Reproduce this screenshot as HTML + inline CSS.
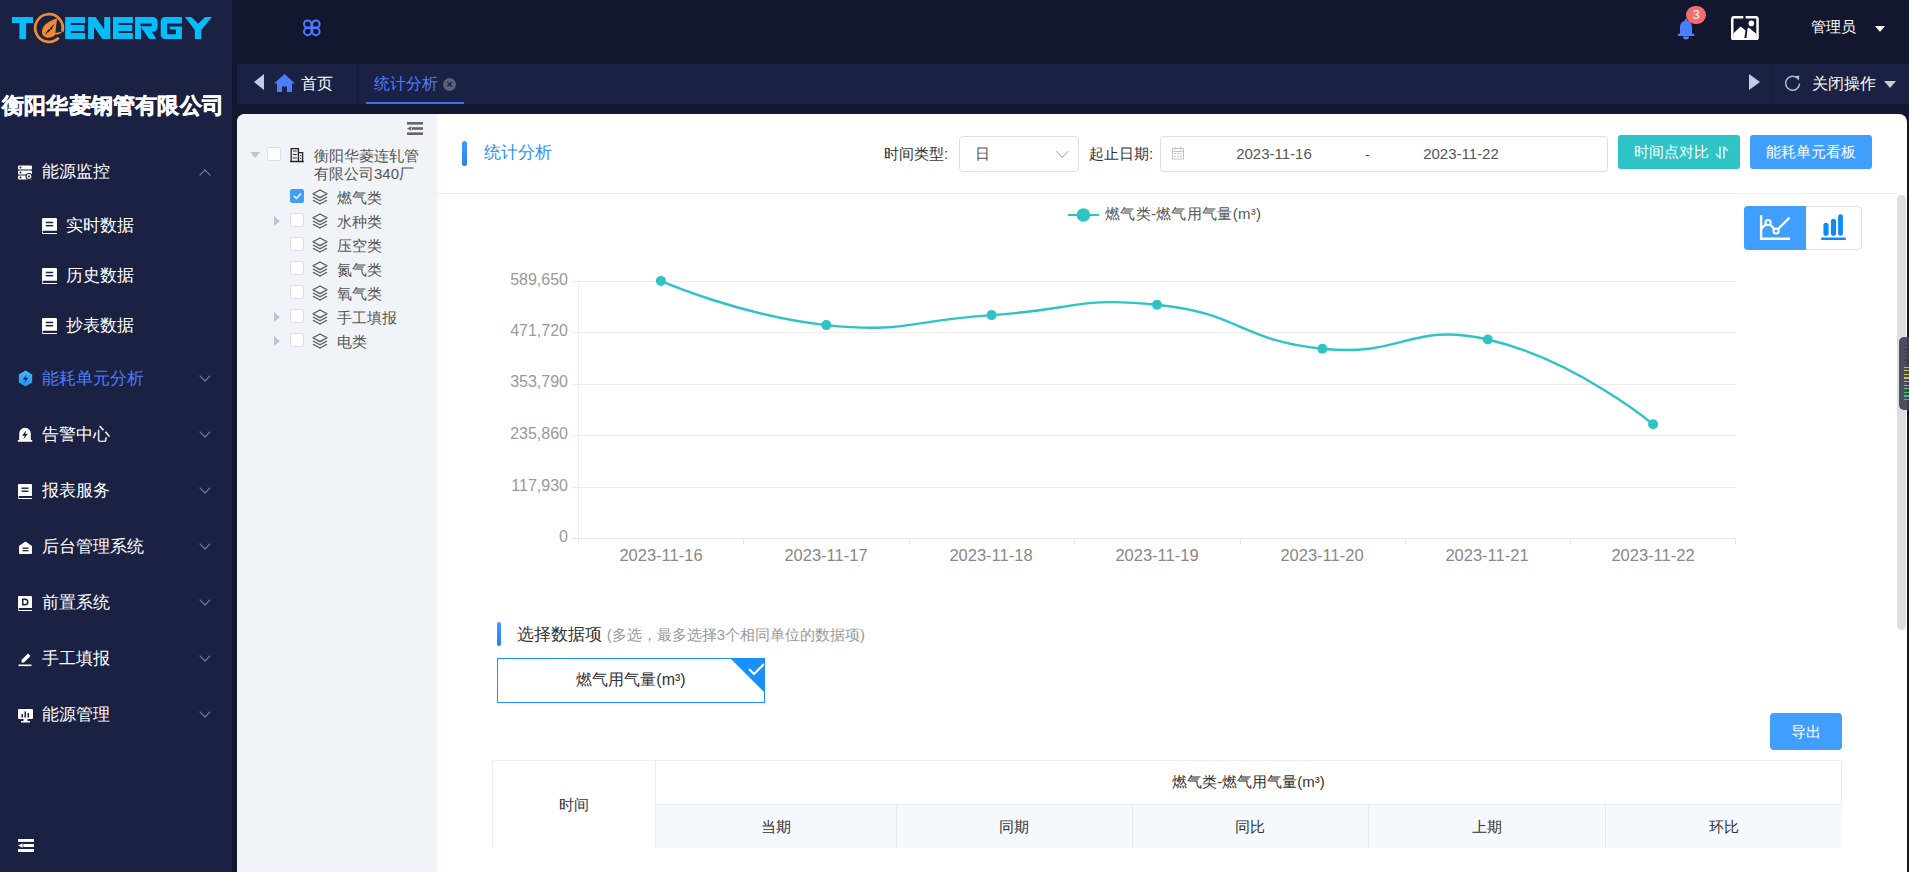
<!DOCTYPE html>
<html><head><meta charset="utf-8">
<style>
*{box-sizing:border-box;margin:0;padding:0}
html,body{width:1909px;height:872px;overflow:hidden;background:#12162e;font-family:"Liberation Sans",sans-serif;}
.abs{position:absolute}
#side{position:absolute;left:0;top:0;width:232px;height:872px;background:#1b2142;color:#fff}
#tabs{position:absolute;left:237px;top:64px;width:1672px;height:40px;background:#1b2142}
#content{position:absolute;left:237px;top:114px;width:1670px;height:780px;background:#fff;border-radius:8px 8px 0 0;overflow:hidden}
#tree{position:absolute;left:0;top:0;width:200px;height:800px;background:#f0f3f8}
.menu{position:absolute;left:0;width:232px;height:40px;font-size:17px;color:#fff;line-height:41px;white-space:nowrap;font-weight:500}
.menu .t{position:absolute;left:42px;top:0}
.menu svg{position:absolute;left:18px;top:13.5px}
.sub .t{left:66px}
.sub svg{left:42px;top:12.5px;width:15px;height:16px}
.chev{position:absolute;left:200.5px;top:14px;width:8px;height:8px;border-right:1.3px solid #80869e;border-bottom:1.3px solid #80869e;transform:rotate(45deg)}
.chev.up{transform:rotate(-135deg);top:20px}
.ylab{position:absolute;left:0;width:568px;font-size:16px;color:#999;text-align:right;line-height:18px}
.xlab{position:absolute;top:546px;font-size:16.5px;color:#888;width:120px;text-align:center;line-height:18px}
.tn{position:absolute;left:100px;font-size:15px;color:#555;line-height:22px;white-space:nowrap}
.cb{position:absolute;left:53px;width:14px;height:14px;border:1px solid #dcdfe6;background:#fff;border-radius:2px}
.tri{position:absolute;left:37px;width:0;height:0;border-top:5px solid transparent;border-bottom:5px solid transparent;border-left:6px solid #c0c4cc}
.lay{position:absolute;left:75px}
.th{position:absolute;font-size:15px;color:#333;text-align:center;line-height:20px}
</style></head>
<body>
<!-- sidebar -->
<div id="side">
  <svg class="abs" style="left:0;top:0" width="232" height="60" viewBox="0 0 232 60">
  <g fill="#06bdfb">
    <path d="M11.9 17.1H33V23.1H26.1V39H19.4V23.1H11.9z"/>
    <path d="M65.2 17.1H85.1V23H70.7V25.1H84.5V31H70.7V33H85.1V39H65.2z"/>
    <path d="M88.1 17.1H95.4L104.2 29.6V17.1H110.3V39H102.4L94 26.8V39H88.1z"/>
    <path d="M113 17.1H132.9V23H118.5V25.1H132.3V31H118.5V33H132.9V39H113z"/>
    <path d="M135.1 17.1H153A4.6 4.6 0 0 1 157.6 21.7V27.2A4.6 4.6 0 0 1 153 31.8H152L156.2 39H149.1L141 27V39H135.1zM140.5 23.4V26.3H151.7V23.4z" fill-rule="evenodd"/>
    <path d="M165 17.1H181.9V23.4H167V34.3H175.9V29.4H170.4L169.2 26.5H181.9V39H165A4.3 4.3 0 0 1 160.7 34.7V21.4A4.3 4.3 0 0 1 165 17.1z"/>
    <path d="M185 17.1H191.4L198.1 23.8 205.2 17.1H211.9L201.2 30V39H194.8V30z"/>
  </g>
  <g fill="none" stroke="#f08a33" stroke-width="2.7">
    <path d="M62.33 31.57A13.8 13.8 0 1 0 58.76 37.76"/>
  </g>
  <path d="M57.2 18.6C49.5 20.5 42.6 25 42 31C41.6 35.2 44.8 38 49 37.8C52 37.6 54.2 36.2 55.2 34.6C58.5 34.4 61 33.5 62.5 31.4L55.4 33C55.8 28 56.5 23 57.2 18.6Z" fill="#f08a33"/>
  <path d="M45.6 34.2L48.5 30.2 48.7 31.4 51.3 27.6 51.5 28.7 53.6 24.8" fill="none" stroke="#1b2142" stroke-width="1.1"/>
</svg>
  <div class="abs" style="left:2px;top:91px;font-size:22px;font-weight:700;color:#fff;white-space:nowrap;letter-spacing:0.2px;-webkit-text-stroke:0.5px #fff">衡阳华菱钢管有限公司</div>

  <div class="menu" style="top:151px">
    <svg width="14" height="15" viewBox="0 0 14 15"><rect x="0" y="0.5" width="14" height="4" rx="1" fill="#fff"/><rect x="0" y="5.5" width="14" height="4" rx="1" fill="#fff"/><rect x="0" y="10.5" width="14" height="4" rx="1" fill="#fff"/><circle cx="2.5" cy="2.5" r="1" fill="#1b2142"/><circle cx="2.5" cy="7.5" r="1" fill="#1b2142"/><circle cx="2.5" cy="12.5" r="1" fill="#1b2142"/><circle cx="11" cy="11.5" r="3.5" fill="#1b2142"/><circle cx="11" cy="11.5" r="2.4" fill="#fff"/><circle cx="11" cy="11.5" r="1" fill="#1b2142"/></svg>
    <span class="t">能源监控</span><div class="chev up"></div></div>
  <div class="menu sub" style="top:205px"><svg width="14" height="15" viewBox="0 0 14 15"><path d="M1 0h12a1 1 0 0 1 1 1v11H1.5a1 1 0 0 0 0 2H14v1H1a1 1 0 0 1-1-1V1a1 1 0 0 1 1-1z" fill="#fff"/><rect x="3.5" y="3.5" width="7" height="1.4" fill="#1b2142"/><rect x="3.5" y="6.5" width="7" height="1.4" fill="#1b2142"/></svg><span class="t">实时数据</span></div>
  <div class="menu sub" style="top:255px"><svg width="14" height="15" viewBox="0 0 14 15"><path d="M1 0h12a1 1 0 0 1 1 1v11H1.5a1 1 0 0 0 0 2H14v1H1a1 1 0 0 1-1-1V1a1 1 0 0 1 1-1z" fill="#fff"/><rect x="3.5" y="3.5" width="7" height="1.4" fill="#1b2142"/><rect x="3.5" y="6.5" width="7" height="1.4" fill="#1b2142"/></svg><span class="t">历史数据</span></div>
  <div class="menu sub" style="top:305px"><svg width="14" height="15" viewBox="0 0 14 15"><path d="M1 0h12a1 1 0 0 1 1 1v11H1.5a1 1 0 0 0 0 2H14v1H1a1 1 0 0 1-1-1V1a1 1 0 0 1 1-1z" fill="#fff"/><rect x="3.5" y="3.5" width="7" height="1.4" fill="#1b2142"/><rect x="3.5" y="6.5" width="7" height="1.4" fill="#1b2142"/></svg><span class="t">抄表数据</span></div>
  <div class="menu" style="top:358px;color:#4d7cfe">
    <svg width="15" height="17" viewBox="0 0 15 17" style="top:11.5px"><defs><linearGradient id="hg" x1="0" y1="0" x2="0" y2="1"><stop offset="0" stop-color="#3cc0f8"/><stop offset="1" stop-color="#2b8cf0"/></linearGradient></defs><path d="M7.5 0.6L14.2 4.4v8.2L7.5 16.4 0.8 12.6V4.4z" fill="url(#hg)"/><path d="M8.8 4.2L4.9 9.4h2.6L6.3 13 10.2 7.8H7.6z" fill="#1b2142"/></svg>
    <span class="t">能耗单元分析</span><div class="chev"></div></div>
  <div class="menu" style="top:414px">
    <svg width="16" height="16" viewBox="0 0 16 16" style="left:17px;top:12.5px"><path d="M2.2 13V6.6A5.8 5.8 0 0 1 13.8 6.6V13H15.2V14.8H0.8V13z" fill="#fff"/><path d="M9.3 3.3L5 8.8H7.6L6.5 12.2 10.8 6.7H8.2z" fill="#1b2142"/></svg>
    <span class="t">告警中心</span><div class="chev"></div></div>
  <div class="menu" style="top:470px"><svg width="14" height="15" viewBox="0 0 14 15"><path d="M1 0h12a1 1 0 0 1 1 1v11H1.5a1 1 0 0 0 0 2H14v1H1a1 1 0 0 1-1-1V1a1 1 0 0 1 1-1z" fill="#fff"/><rect x="3.5" y="3.5" width="7" height="1.4" fill="#1b2142"/><rect x="3.5" y="6.5" width="7" height="1.4" fill="#1b2142"/></svg><span class="t">报表服务</span><div class="chev"></div></div>
  <div class="menu" style="top:526px">
    <svg width="15" height="15" viewBox="0 0 15 15"><path d="M7.5 1.5L14 6v7a1 1 0 0 1-1 1H2a1 1 0 0 1-1-1V6z" fill="#fff"/><rect x="4.5" y="7.5" width="6" height="1.3" fill="#1b2142"/><rect x="4.5" y="10" width="6" height="1.3" fill="#1b2142"/></svg>
    <span class="t">后台管理系统</span><div class="chev"></div></div>
  <div class="menu" style="top:582px">
    <svg width="14" height="15" viewBox="0 0 14 15"><path d="M1 0h12a1 1 0 0 1 1 1v11H1.5a1 1 0 0 0 0 2H14v1H1a1 1 0 0 1-1-1V1a1 1 0 0 1 1-1z" fill="#fff"/><path d="M4 2.5h3a3 3 0 0 1 0 7H4z" fill="#1b2142"/><path d="M5.5 4h1.5a1.5 1.5 0 0 1 0 4H5.5z" fill="#fff"/></svg>
    <span class="t">前置系统</span><div class="chev"></div></div>
  <div class="menu" style="top:638px">
    <svg width="15" height="15" viewBox="0 0 15 15"><path d="M10 1.5l2.5 2.5-6.5 6.5H3.5V8z" fill="#fff"/><rect x="0.5" y="12.5" width="13" height="1.6" fill="#fff"/></svg>
    <span class="t">手工填报</span><div class="chev"></div></div>
  <div class="menu" style="top:694px">
    <svg width="15" height="15" viewBox="0 0 15 15"><rect x="0" y="1" width="15" height="10" rx="1" fill="#fff"/><rect x="5.5" y="11" width="4" height="2" fill="#fff"/><rect x="3" y="13" width="9" height="1.5" fill="#fff"/><rect x="3.5" y="6" width="1.5" height="3.5" fill="#1b2142"/><rect x="6.5" y="3.5" width="1.5" height="6" fill="#1b2142"/><rect x="9.5" y="5" width="1.5" height="4.5" fill="#1b2142"/></svg>
    <span class="t">能源管理</span><div class="chev"></div></div>
  <svg class="abs" style="left:18px;top:838px" width="17" height="15" viewBox="0 0 17 15"><rect x="0" y="1" width="16" height="2.9" fill="#fff"/><rect x="5.3" y="6" width="10.7" height="3" fill="#fff"/><rect x="0" y="11.1" width="16" height="2.9" fill="#fff"/><path d="M0 7.5L4.6 5.2v4.6z" fill="#fff"/></svg>
</div>

<!-- header -->
<svg class="abs" style="left:300px;top:16px" width="24" height="24" viewBox="0 0 24 24"><g fill="none" stroke="#4a7dff" stroke-width="2"><path d="M11.8 11.8H7.7A3.7 3.7 0 1 1 11.4 8.1V11.8z"/><path d="M11.8 11.8H15.9A3.7 3.7 0 1 0 12.2 8.1V11.8z"/><path d="M11.8 11.8H7.7A3.7 3.7 0 1 0 11.4 15.5V11.8z"/><path d="M11.8 11.8H15.9A3.7 3.7 0 1 1 12.2 15.5V11.8z"/></g></svg>
<svg class="abs" style="left:1677px;top:18px" width="18" height="23" viewBox="0 0 18 23"><path d="M9 1a1.4 1.4 0 0 1 1.4 1.4v0.3C13.2 3.5 15 6 15 9v6.5l2.2 0.6v2H0.8v-2L3 15.5V9c0-3 1.8-5.5 4.6-6.3v-0.3A1.4 1.4 0 0 1 9 1z" fill="#4a80ff"/><path d="M6 18.5h6a3 3 0 0 1-6 0z" fill="#4a80ff"/></svg>
<div class="abs" style="left:1686px;top:6px;width:20px;height:18px;border-radius:9px;background:#f56c6c;color:#fff;font-size:13px;text-align:center;line-height:18px;border:0">3</div>
<svg class="abs" style="left:1730.5px;top:15.6px" width="28" height="24.5" viewBox="0 0 28 24.5"><path d="M12.3 1.25H2.75A1.5 1.5 0 0 0 1.25 2.75V21.75A1.5 1.5 0 0 0 2.75 23.25H25.05A1.5 1.5 0 0 0 26.55 21.75V2.75A1.5 1.5 0 0 0 25.05 1.25H14.6" fill="none" stroke="#fff" stroke-width="2.5"/><path d="M2.3 17.5L9.6 10.4 14.6 14.5 13.3 22.2H2.3z" fill="#fff"/><path d="M16.6 12.2A1.4 1.4 0 0 1 18 11.8L25.5 18V22.2H15.4z" fill="#fff"/><circle cx="20.3" cy="7.4" r="2.8" fill="#fff"/></svg>
<div class="abs" style="left:1811px;top:17px;font-size:15px;color:#fff;line-height:20px;font-weight:500">管理员</div>
<div class="abs" style="left:1875px;top:26px;width:0;height:0;border-left:5.5px solid transparent;border-right:5.5px solid transparent;border-top:6.5px solid #fff"></div>

<!-- tabs -->
<div id="tabs">
  <div class="abs" style="left:17px;top:10px;width:0;height:0;border-top:8px solid transparent;border-bottom:8px solid transparent;border-right:10px solid #c5cae9"></div>
  <svg class="abs" style="left:37px;top:10px" width="21" height="18" viewBox="0 0 21 18"><path d="M10.5 0L21 9.5h-3V18h-5v-5.5H8V18H3V9.5H0z" fill="#4d7cfe"/></svg>
  <div class="abs" style="left:64px;top:9px;font-size:16px;color:#fff;line-height:22px;font-weight:500">首页</div>
  <div class="abs" style="left:120px;top:0;width:1px;height:40px;background:#161b36"></div>
  <div class="abs" style="left:137px;top:9px;font-size:16px;color:#4d7cfe;line-height:22px">统计分析</div>
  <div class="abs" style="left:206px;top:14px;width:13px;height:13px;border-radius:50%;background:#5b6178;color:#1b2142;font-size:11px;line-height:13px;text-align:center;font-weight:bold">×</div>
  <div class="abs" style="left:129px;top:37.5px;width:98px;height:2.5px;background:#3d6df2"></div>
  <div class="abs" style="left:1512px;top:10px;width:0;height:0;border-top:8.2px solid transparent;border-bottom:8.2px solid transparent;border-left:11px solid #c5cae9"></div>
  <div class="abs" style="left:1535px;top:0;width:1px;height:40px;background:#161b36"></div>
  <svg class="abs" style="left:1547px;top:10px" width="18" height="18" viewBox="0 0 18 18"><path d="M15.6 9.5A7 7 0 1 1 12.8 3.6" fill="none" stroke="#b4b9d0" stroke-width="1.5"/><path d="M10.6 2.2L15.4 1.6 14.8 6.6z" fill="#b4b9d0"/></svg>
  <div class="abs" style="left:1575px;top:9px;font-size:16px;color:#fff;line-height:22px;font-weight:500">关闭操作</div>
  <div class="abs" style="left:1647px;top:17px;width:0;height:0;border-left:6px solid transparent;border-right:6px solid transparent;border-top:7px solid #ccc"></div>
</div>

<div id="content">
  <div id="tree">
    <svg class="abs" style="left:170px;top:8px" width="17" height="14" viewBox="0 0 17 14"><rect x="0" y="0" width="16" height="2.6" fill="#666"/><rect x="5" y="5.2" width="11" height="2.6" fill="#666"/><rect x="0" y="10.4" width="16" height="2.6" fill="#666"/><path d="M0 6.5L4.3 4.2v4.6z" fill="#666"/></svg>
    <div class="abs" style="left:13px;top:38px;width:0;height:0;border-left:5px solid transparent;border-right:5px solid transparent;border-top:6px solid #c0c4cc"></div>
    <div class="cb" style="left:30px;top:33px"></div>
    <svg class="abs" style="left:53px;top:33px" width="15" height="16" viewBox="0 0 15 16"><g fill="none" stroke="#222" stroke-width="1.3"><path d="M1.2 14.5V1.6H8.4V14.5"/><path d="M8.4 5.6H12.6V14.5"/><path d="M0 14.6H13.8" stroke-width="1.5"/></g><g fill="#444"><rect x="2.8" y="3.4" width="4" height="1.1"/><rect x="2.8" y="7" width="4" height="1.1"/><rect x="2.8" y="10.4" width="4" height="1.1"/><rect x="10" y="8" width="1.2" height="1.2"/><rect x="10" y="10.6" width="1.2" height="1.2"/></g></svg>
    <div class="tn" style="left:77px;top:33px;line-height:18px;white-space:normal;width:115px">衡阳华菱连轧管<br>有限公司340厂</div>
    <div class="cb" style="top:75px;background:#409eff;border-color:#409eff"><svg style="position:absolute;left:2px;top:2px" width="9" height="8" viewBox="0 0 9 8"><path d="M1 4l2.5 2.5L8 1.5" fill="none" stroke="#fff" stroke-width="1.4"/></svg></div>
    <div class="tri" style="top:102px"></div><div class="cb" style="top:99px"></div>
    <div class="cb" style="top:123px"></div>
    <div class="cb" style="top:147px"></div>
    <div class="cb" style="top:171px"></div>
    <div class="tri" style="top:198px"></div><div class="cb" style="top:195px"></div>
    <div class="tri" style="top:222px"></div><div class="cb" style="top:219px"></div>
    <svg class="lay" style="top:75px" width="16" height="16" viewBox="0 0 16 16"><g fill="none" stroke="#555" stroke-width="1.3" stroke-linejoin="round"><path d="M8 1L15 4.8 8 8.6 1 4.8z"/><path d="M1 8l7 3.8L15 8"/><path d="M1 11.2l7 3.8 7-3.8"/></g></svg>
    <svg class="lay" style="top:99px" width="16" height="16" viewBox="0 0 16 16"><g fill="none" stroke="#555" stroke-width="1.3" stroke-linejoin="round"><path d="M8 1L15 4.8 8 8.6 1 4.8z"/><path d="M1 8l7 3.8L15 8"/><path d="M1 11.2l7 3.8 7-3.8"/></g></svg>
    <svg class="lay" style="top:123px" width="16" height="16" viewBox="0 0 16 16"><g fill="none" stroke="#555" stroke-width="1.3" stroke-linejoin="round"><path d="M8 1L15 4.8 8 8.6 1 4.8z"/><path d="M1 8l7 3.8L15 8"/><path d="M1 11.2l7 3.8 7-3.8"/></g></svg>
    <svg class="lay" style="top:147px" width="16" height="16" viewBox="0 0 16 16"><g fill="none" stroke="#555" stroke-width="1.3" stroke-linejoin="round"><path d="M8 1L15 4.8 8 8.6 1 4.8z"/><path d="M1 8l7 3.8L15 8"/><path d="M1 11.2l7 3.8 7-3.8"/></g></svg>
    <svg class="lay" style="top:171px" width="16" height="16" viewBox="0 0 16 16"><g fill="none" stroke="#555" stroke-width="1.3" stroke-linejoin="round"><path d="M8 1L15 4.8 8 8.6 1 4.8z"/><path d="M1 8l7 3.8L15 8"/><path d="M1 11.2l7 3.8 7-3.8"/></g></svg>
    <svg class="lay" style="top:195px" width="16" height="16" viewBox="0 0 16 16"><g fill="none" stroke="#555" stroke-width="1.3" stroke-linejoin="round"><path d="M8 1L15 4.8 8 8.6 1 4.8z"/><path d="M1 8l7 3.8L15 8"/><path d="M1 11.2l7 3.8 7-3.8"/></g></svg>
    <svg class="lay" style="top:219px" width="16" height="16" viewBox="0 0 16 16"><g fill="none" stroke="#555" stroke-width="1.3" stroke-linejoin="round"><path d="M8 1L15 4.8 8 8.6 1 4.8z"/><path d="M1 8l7 3.8L15 8"/><path d="M1 11.2l7 3.8 7-3.8"/></g></svg>
    <div class="tn" style="top:73px">燃气类</div>
    <div class="tn" style="top:97px">水种类</div>
    <div class="tn" style="top:121px">压空类</div>
    <div class="tn" style="top:145px">氮气类</div>
    <div class="tn" style="top:169px">氧气类</div>
    <div class="tn" style="top:193px">手工填报</div>
    <div class="tn" style="top:217px">电类</div>
  </div>
</div>

<!-- main panel (absolute page coords) -->
<div class="abs" style="left:462px;top:141px;width:5px;height:25px;border-radius:3px;background:linear-gradient(#3aa0ff,#2f7df6)"></div>
<div class="abs" style="left:484px;top:142px;font-size:17px;color:#2b8ff7;line-height:22px">统计分析</div>
<div class="abs" style="left:884px;top:144px;font-size:15px;color:#333;line-height:20px">时间类型:</div>
<div class="abs" style="left:959px;top:136px;width:120px;height:36px;border:1px solid #dcdfe6;border-radius:4px;background:#fff"></div>
<div class="abs" style="left:975px;top:144px;font-size:15px;color:#555;line-height:20px">日</div>
<div class="abs" style="left:1057.5px;top:147px;width:8.5px;height:8.5px;border-right:1px solid #b0b3ba;border-bottom:1px solid #b0b3ba;transform:rotate(45deg)"></div>
<div class="abs" style="left:1089px;top:144px;font-size:15px;color:#333;line-height:20px">起止日期:</div>
<div class="abs" style="left:1160px;top:136px;width:448px;height:36px;border:1px solid #dcdfe6;border-radius:4px;background:#fff"></div>
<svg class="abs" style="left:1171px;top:146px" width="14" height="14" viewBox="0 0 14 14"><g fill="none" stroke="#c0c4cc" stroke-width="1"><rect x="1.5" y="2.5" width="11" height="10.5"/><path d="M1.5 5.5h11M4 1v3M10 1v3"/></g><g fill="#c0c4cc"><rect x="3.5" y="7" width="1.5" height="1.2"/><rect x="6.2" y="7" width="1.5" height="1.2"/><rect x="9" y="7" width="1.5" height="1.2"/><rect x="3.5" y="9.8" width="1.5" height="1.2"/><rect x="6.2" y="9.8" width="1.5" height="1.2"/><rect x="9" y="9.8" width="1.5" height="1.2"/></g></svg>
<div class="abs" style="left:1214px;top:144px;width:120px;text-align:center;font-size:15px;color:#555;line-height:20px">2023-11-16</div>
<div class="abs" style="left:1365px;top:145px;font-size:15px;color:#555;line-height:20px">-</div>
<div class="abs" style="left:1401px;top:144px;width:120px;text-align:center;font-size:15px;color:#555;line-height:20px">2023-11-22</div>
<div class="abs" style="left:1618px;top:135px;width:122px;height:34px;border-radius:3px;background:#2ec3c5;color:#fff;font-size:15px;line-height:33px"><span style="position:absolute;left:16px;top:0">时间点对比</span><svg style="position:absolute;left:97px;top:11px" width="14" height="13" viewBox="0 0 14 13"><g fill="none" stroke="#fff" stroke-width="1.3"><path d="M5 0.5V12L1 8"/><path d="M9 12.5V1L13 5"/></g></svg></div>
<div class="abs" style="left:1750px;top:135px;width:122px;height:34px;border-radius:3px;background:#409eff;color:#fff;font-size:15px;line-height:33px;text-align:center">能耗单元看板</div>
<div class="abs" style="left:437px;top:193px;width:1460px;height:1px;background:#ebeef5"></div>

<!-- scrollbar -->
<div class="abs" style="left:1897px;top:195px;width:9px;height:435px;border-radius:5px;background:#dedede"></div>
<div class="abs" style="left:1899px;top:337px;width:12px;height:73px;border-radius:5px 0 0 5px;background:#4a4f63"></div><div class="abs" style="left:1907px;top:337px;width:2px;height:73px;background:#3a3e50"></div><div class="abs" style="left:1904px;top:345.0px;width:5px;height:1.3px;background:#383d50"></div><div class="abs" style="left:1904px;top:348.6px;width:5px;height:1.3px;background:#383d50"></div><div class="abs" style="left:1904px;top:352.2px;width:5px;height:1.3px;background:#383d50"></div><div class="abs" style="left:1904px;top:355.8px;width:5px;height:1.3px;background:#383d50"></div><div class="abs" style="left:1904px;top:359.4px;width:5px;height:1.3px;background:#383d50"></div><div class="abs" style="left:1904px;top:363.0px;width:5px;height:1.3px;background:#383d50"></div><div class="abs" style="left:1904px;top:366.6px;width:5px;height:1.3px;background:#d9b43a"></div><div class="abs" style="left:1904px;top:370.2px;width:5px;height:1.3px;background:#dcc23c"></div><div class="abs" style="left:1904px;top:373.8px;width:5px;height:1.3px;background:#d6c842"></div><div class="abs" style="left:1904px;top:377.4px;width:5px;height:1.3px;background:#c4cc48"></div><div class="abs" style="left:1904px;top:381.0px;width:5px;height:1.3px;background:#a8cc50"></div><div class="abs" style="left:1904px;top:384.6px;width:5px;height:1.3px;background:#8cc858"></div><div class="abs" style="left:1904px;top:388.2px;width:5px;height:1.3px;background:#6cc468"></div><div class="abs" style="left:1904px;top:391.8px;width:5px;height:1.3px;background:#50c080"></div><div class="abs" style="left:1904px;top:395.4px;width:5px;height:1.3px;background:#3cbd98"></div><div class="abs" style="left:1904px;top:399.0px;width:5px;height:1.3px;background:#30bcaa"></div>

<!-- chart -->
<svg class="abs" style="left:0;top:0" width="1909" height="872">
  <g stroke="#ececec" stroke-width="1">
    <path d="M572 281.5H1736M572 332.5H1736M572 384.5H1736M572 435.5H1736M572 487.5H1736"/>
    <path d="M578.5 281V538"/>
  </g>
  <g stroke="#e6e6e6" stroke-width="1">
    <path d="M572 538.5H1736"/>
    <path d="M578.5 538v6M743.5 538v6M909.5 538v6M1074.5 538v6M1240.5 538v6M1405.5 538v6M1570.5 538v6M1735.5 538v6"/>
  </g>
  <path d="M660.9 280.9 C660.9 280.9 742.2 316.4 826.3 325.1 C907.6 333.5 909.0 320.2 991.6 315.1 C1074.3 310.0 1075.7 296.4 1157.0 304.7 C1241.0 313.2 1238.3 339.9 1322.4 348.7 C1403.7 357.3 1409.8 321.7 1487.8 339.5 C1575.2 359.5 1653.1 424.3 1653.1 424.3" fill="none" stroke="#2ec3c5" stroke-width="2.4"/>
  <g fill="#2ec3c5"><circle cx="660.9" cy="280.9" r="5"/><circle cx="826.3" cy="325.1" r="5"/><circle cx="991.6" cy="315.1" r="5"/><circle cx="1157.0" cy="304.7" r="5"/><circle cx="1322.4" cy="348.7" r="5"/><circle cx="1487.8" cy="339.5" r="5"/><circle cx="1653.1" cy="424.3" r="5"/></g>
  <path d="M1068 215H1099" stroke="#2ec3c5" stroke-width="2"/>
  <circle cx="1083.4" cy="215" r="6.8" fill="#2ec3c5"/>
</svg>
<div class="ylab" style="top:271px">589,650</div>
<div class="ylab" style="top:322px">471,720</div>
<div class="ylab" style="top:373px">353,790</div>
<div class="ylab" style="top:425px">235,860</div>
<div class="ylab" style="top:477px">117,930</div>
<div class="ylab" style="top:528px">0</div>
<div class="xlab" style="left:601px">2023-11-16</div>
<div class="xlab" style="left:766px">2023-11-17</div>
<div class="xlab" style="left:931px">2023-11-18</div>
<div class="xlab" style="left:1097px">2023-11-19</div>
<div class="xlab" style="left:1262px">2023-11-20</div>
<div class="xlab" style="left:1427px">2023-11-21</div>
<div class="xlab" style="left:1593px">2023-11-22</div>
<div class="abs" style="left:1105px;top:205px;font-size:15px;color:#555;line-height:18px;letter-spacing:0.3px">燃气类-燃气用气量(m³)</div>

<!-- chart type toggle -->
<div class="abs" style="left:1744px;top:206px;width:118px;height:44px;border:1px solid #dcdfe6;border-radius:4px;background:#fff"></div>
<div class="abs" style="left:1744px;top:206px;width:62px;height:44px;border-radius:4px 0 0 4px;background:#409eff"></div>
<svg class="abs" style="left:1759px;top:214px" width="34" height="28" viewBox="0 0 34 28"><g fill="none" stroke="#fff" stroke-width="2.4"><path d="M2.1 1.3V24.8H31"/><path d="M2.1 14.6L9.1 8.5 17.1 17 29.7 4.4" stroke-linecap="round"/></g><circle cx="9.1" cy="8.5" r="2.6" fill="#409eff" stroke="#fff" stroke-width="2"/><circle cx="17.1" cy="17" r="2.6" fill="#409eff" stroke="#fff" stroke-width="2"/></svg>
<svg class="abs" style="left:1820px;top:213px" width="28" height="28" viewBox="0 0 28 28"><g fill="#0a8cff"><rect x="3.4" y="9.8" width="5.2" height="13" rx="2.6"/><rect x="10.9" y="5.7" width="5.1" height="17.1" rx="2.55"/><rect x="18.1" y="1.3" width="4.8" height="21.5" rx="2.4"/><rect x="1" y="24.5" width="25" height="2.4" rx="1.2"/></g></svg>

<!-- select data items -->
<div class="abs" style="left:497px;top:622px;width:4px;height:24px;border-radius:2px;background:linear-gradient(#3aa0ff,#2f7df6)"></div>
<div class="abs" style="left:517px;top:625px;font-size:17px;color:#333;line-height:20px;white-space:nowrap">选择数据项 <span style="font-size:15px;color:#999">(多选，最多选择3个相同单位的数据项)</span></div>
<div class="abs" style="left:497px;top:658px;width:268px;height:45px;border:1.5px solid #1890ff;background:#fff;overflow:hidden">
  <div class="abs" style="right:-1px;top:-1px;width:0;height:0;border-top:35px solid #1890ff;border-left:35px solid transparent"></div>
  <svg class="abs" style="right:-1px;top:3px" width="18" height="14" viewBox="0 0 18 14"><path d="M2 7l5 5L17 2" fill="none" stroke="#fff" stroke-width="2"/></svg>
  <div class="abs" style="left:0;width:266px;top:10px;text-align:center;font-size:16px;color:#333;line-height:22px">燃气用气量(m³)</div>
</div>

<!-- export -->
<div class="abs" style="left:1770px;top:713px;width:72px;height:37px;border-radius:4px;background:#409eff;color:#fff;font-size:15px;line-height:37px;text-align:center">导出</div>

<!-- table -->
<div class="abs" style="left:492px;top:760px;width:1350px;height:120px;border:1px solid #ebeef5;border-bottom:none;background:#fff"></div>
<div class="abs" style="left:655px;top:804px;width:1187px;height:80px;background:#f5f8fc;border-top:1px solid #ebeef5"></div>
<div class="abs" style="left:655px;top:760px;width:1px;height:120px;background:#ebeef5"></div>
<div class="abs" style="left:896px;top:804px;width:1px;height:80px;background:#e6eaf0"></div>
<div class="abs" style="left:1132px;top:804px;width:1px;height:80px;background:#e6eaf0"></div>
<div class="abs" style="left:1368px;top:804px;width:1px;height:80px;background:#e6eaf0"></div>
<div class="abs" style="left:1605px;top:804px;width:1px;height:80px;background:#e6eaf0"></div>
<div class="th" style="left:492px;width:163px;top:795px">时间</div>
<div class="th" style="left:655px;width:1187px;top:772px">燃气类-燃气用气量(m³)</div>
<div class="th" style="left:655px;width:241px;top:817px">当期</div>
<div class="th" style="left:896px;width:236px;top:817px">同期</div>
<div class="th" style="left:1132px;width:236px;top:817px">同比</div>
<div class="th" style="left:1368px;width:237px;top:817px">上期</div>
<div class="th" style="left:1605px;width:237px;top:817px">环比</div>
<div class="abs" style="left:437px;top:848px;width:1466px;height:24px;background:#fff"></div>
</body></html>
